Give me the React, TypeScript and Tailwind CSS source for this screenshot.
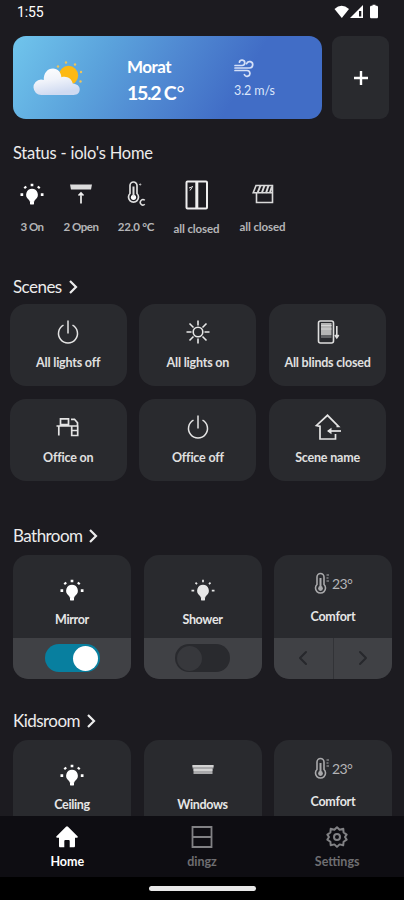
import type { ReactNode } from "react";
import { ChevronLeft, ChevronRight } from "lucide-react";

const BulbIcon = ({ dim = false }: { dim?: boolean }) => (
  <svg
    width="24"
    height="22"
    viewBox="0 0 24 22"
    className={dim ? "text-[#e6e6e6]" : "text-white"}
    fill="currentColor"
    stroke="currentColor"
  >
    <path
      d="M12 5.800a5.900 5.900 0 0 0-3.500 10.600c.8.600 1.100 1.100 1.100 2h4.800c0-.9.3-1.400 1.100-2A5.900 5.900 0 0 0 12 5.800z"
      stroke="none"
    />
    <rect x="10" y="17.800" width="4" height="3.800" rx="1.200" stroke="none" />
    <path
      d="M12 .8v2.400M4.500 3.600l1.500 1.600M19.500 3.600l-1.500 1.600M.5 11.700h2.700M20.800 11.700h2.700"
      strokeWidth={dim ? 1.7 : 2.700}
    />
  </svg>
);

const PowerIcon = () => (
  <svg width="22" height="26" viewBox="0 0 22 26" fill="none" stroke="#e4e4e4" strokeWidth="1.500">
    <path d="M11 1.500v13M6.500 6.200a9.500 9.500 0 1 0 9 0" />
  </svg>
);

const SunIcon = () => (
  <svg width="26" height="26" viewBox="0 0 26 26" fill="none" stroke="#e8e8e8" strokeWidth="1.600">
    <circle cx="13" cy="13" r="4.800" />
    <path d="M13 1.500v5M13 19.500v5M1.500 13h5M19.500 13h5M4.500 4.500l4 4M17.500 17.500l4 4M4.500 21.500l4-4M17.500 8.500l4-4" />
  </svg>
);

const BlindIcon = () => (
  <svg width="24" height="26" viewBox="0 0 24 26" fill="none" stroke="#dedede" strokeWidth="1.600">
    <rect x="2.500" y="2" width="15" height="22" rx="2" />
    <path d="M5 4h10.500v12H5z" fill="#b4b4b4" stroke="none" />
    <path d="M5 6.500h10.500M5 10h10.500" stroke="#d6d6d6" strokeWidth="1" />
    <path d="M5 16h10.500v3H5z" fill="#606164" stroke="none" />
    <path d="M20.800 7v11M18.900 16l1.900 2.800 1.900-2.800" />
  </svg>
);

const DeskIcon = () => (
  <svg width="24" height="20" viewBox="0 0 24 20" fill="none" stroke="#e4e4e4" strokeWidth="1.700">
    <path d="M4.500 1.800h8v5.700h-8zM.5 9h22M2.800 9v9.500M15.700 9v9.500h6V9M15.700 13.500h6M15 2.300h3.500l3 3.500v3M5 8h7" />
  </svg>
);

const HouseIcon = () => (
  <svg width="28" height="28" viewBox="0 0 28 28" fill="none" stroke="#e4e4e4" strokeWidth="1.700">
    <path d="M22.500 13.500h2L13.500 2.300 2.500 12.500l3.500.8V26h15.500v-5" />
    <path d="M27 18H14" />
    <path d="M17.500 14.800L13 18l4.500 3.200z" fill="#e4e4e4" stroke="none" />
  </svg>
);

const ComfortThermometer = () => (
  <svg width="17" height="24" viewBox="1 0 17 24" fill="none" stroke="#a9a9ab" strokeWidth="1.600">
    <path d="M4 12.500V5a3.500 3.500 0 0 1 7 0v7.500a5 5 0 1 1-7 0z" />
    <circle cx="7.500" cy="16.500" r="2.400" fill="#a9a9ab" stroke="none" />
    <path d="M7.500 6v10" strokeWidth="2" />
    <path d="M13.500 3h2.500M13.500 6h2M13.500 9h2.500" strokeWidth="1.200" />
  </svg>
);

const Thermometer = () => (
  <svg width="20" height="28" viewBox="0 0 20 28" fill="none" stroke="#dedede" strokeWidth="1.700">
    <path d="M4 13.500V5.500a3.500 3.500 0 0 1 7 0v8a5 5 0 1 1-7 0z" />
    <circle cx="7.500" cy="17.300" r="2.600" fill="#ffffff" stroke="none" />
    <path d="M7.500 6.500v10" strokeWidth="2" />
    <circle cx="14.200" cy="4.500" r=".6" strokeWidth="1" />
    <path d="M18.800 20.300a2.700 2.700 0 1 0 0 4" strokeWidth="1.500" />
  </svg>
);

const OpenIcon = () => (
  <svg width="24" height="22" viewBox="0 0 24 22" fill="none" stroke="#efefef">
    <path d="M1 1.500h22l-1 5H2z" fill="#dcdcdc" stroke="none" />
    <path d="M12 20.500V10M9.500 12.500L12 10l2.500 2.500" strokeWidth="1.700" />
  </svg>
);

const WindowIcon = () => (
  <svg width="24" height="30" viewBox="0 0 24 30" fill="none" stroke="#eeeeee" strokeWidth="2">
    <rect x="1.500" y="1.500" width="20.500" height="27" rx="1" />
    <path d="M11.800 2v26" strokeWidth="3" />
    <path d="M4 8l4-1.500M5 10.500l2-3" strokeWidth="1" />
  </svg>
);

const AwningIcon = () => (
  <svg width="22" height="20" viewBox="0 0 22 20" fill="none" stroke="#d9d9d9" strokeWidth="1.600">
    <path d="M4 1.500h16.500v7.300H1.200L4 1.500zM4.500 9v9.500h16V8.500" />
    <path d="M8.500 1.500L5.500 9M12.500 1.500L9.800 9M16.500 1.500L14 9M20 2.500L17.800 9" strokeWidth="2" />
  </svg>
);

const WeatherIcon = () => (
  <svg width="50" height="36" viewBox="0 0 50 36">
    <defs>
      <linearGradient id="cloud" x1="0" y1="0" x2="0.3" y2="1">
        <stop offset="0" stopColor="#ffffff" />
        <stop offset="0.5" stopColor="#f0f3fa" />
        <stop offset="1" stopColor="#cfdaf1" />
      </linearGradient>
    </defs>
    <circle cx="35.500" cy="14.500" r="9.700" fill="#fdb913" />
    <g fill="#edc45c">
      <circle cx="33" cy="1.500" r="1.200" />
      <circle cx="42" cy="3.500" r="1.200" />
      <circle cx="25" cy="5.500" r="1.200" />
      <circle cx="48" cy="11" r="1.200" />
      <circle cx="47.500" cy="20.500" r="1.200" />
    </g>
    <path
      d="M8.500 34a7.700 7.700 0 0 1-.5-15.500c1 0 2 .2 2.800.5C10.500 12 14.500 7.500 20 7.500c4.800 0 8 3.500 8.400 8.700 5.300-1.700 10.300 1.300 11.300 6.300 4.300.5 7 2.500 7 5.800 0 3.700-2.500 5.700-6 5.700z"
      fill="url(#cloud)"
    />
  </svg>
);

const WindIcon = () => (
  <svg width="20" height="19" viewBox="0 0 20 19" fill="none" stroke="#d5e0f7" strokeWidth="1.700" strokeLinecap="round">
    <path d="M1 6.500h7a2.700 2.700 0 1 0-2.600-3.300M1 9h14.500a3.200 3.200 0 1 0-3-4.300M1 11.500h12a2.900 2.900 0 1 1-2.600 4.200" />
  </svg>
);

const DingzIcon = () => (
  <svg width="24" height="22" viewBox="0 0 24 22" fill="none" stroke="#818184" strokeWidth="1.800">
    <path d="M2.500 1h19v20h-19zM2.500 11h19" />
  </svg>
);

const HomeIcon = () => (
  <svg width="24" height="22" viewBox="0 0 24 22" fill="#ffffff">
    <path d="M11 .7a1.500 1.500 0 0 1 2 0L22.500 10.200c.6.700.2 1.600-.7 1.600H20V20c0 .8-.5 1.300-1.300 1.300h-4V15a1 1 0 0 0-1-1h-3.400a1 1 0 0 0-1 1v6.300h-4C4.500 21.300 4 20.800 4 20v-8.200H2.200c-.9 0-1.300-.9-.7-1.600z" />
  </svg>
);

const GearIcon = () => (
  <svg width="22" height="22" viewBox="0 0 22 22" fill="none" stroke="#818184" strokeWidth="2" strokeLinejoin="round">
    <path d="M11 1.200l2.600 2.500 3.700-.9.300 3.700 3 2.100L19 11l1.600 2.600-3 2.100-.4 3.600-3.600-.9L11 20.900l-2.600-2.500-3.700.9-.3-3.600-3-2.100L3 11 1.400 8.600l3-2.100.3-3.700 3.700.9z" />
    <circle cx="11" cy="11" r="3" />
  </svg>
);

const ShutterIcon = () => (
  <svg width="24" height="12" viewBox="0 0 24 12" className="-mt-[9px]">
    <path d="M1.500 1h21v3.500h-1v5.500h-19V4.500h-1z" fill="#a9a9ab" />
    <path d="M1.500 2h21M2.500 6h19" stroke="#e0e0e0" strokeWidth="1.500" />
  </svg>
);

const statusItems = [
  { label: "3 On", icon: <BulbIcon />, box: "w-[38px]", text: "tracking-[-0.5px]", drop: "" },
  { label: "2 Open", icon: <OpenIcon />, box: "w-[60px]", text: "tracking-[-0.5px]", drop: "" },
  { label: "22.0 °C", icon: <Thermometer />, box: "w-[50px]", text: "tracking-[-0.2px]", drop: "" },
  { label: "all closed", icon: <WindowIcon />, box: "w-[71px]", text: "tracking-[-0.1px]", drop: "pt-[2px]" },
  { label: "all closed", icon: <AwningIcon />, box: "w-[61px]", text: "tracking-[-0.1px]", drop: "" },
];

const scenes = [
  { label: "All lights off", icon: <PowerIcon /> },
  { label: "All lights on", icon: <SunIcon /> },
  { label: "All blinds closed", icon: <BlindIcon /> },
  { label: "Office on", icon: <DeskIcon /> },
  { label: "Office off", icon: <PowerIcon /> },
  { label: "Scene name", icon: <HouseIcon /> },
];

const SectionTitle = ({ children }: { children: ReactNode }) => (
  <div className="flex h-6 items-center gap-[4px] pl-[13px] text-[17px] tracking-[-0.55px] text-[#ececec]">
    <span>{children}</span>
    <svg width="14" height="16" viewBox="0 0 14 16" fill="none" stroke="#ececec" strokeWidth="2.200">
      <path d="M4 2l6 6-6 6" />
    </svg>
  </div>
);

const Toggle = ({ on }: { on: boolean }) => (
  <div
    className={`flex h-7 w-[55px] items-center rounded-full px-[2px] ${
      on ? "justify-end bg-[#087f9f]" : "justify-start bg-[#292a2e]"
    }`}
  >
    <div className={`size-[25px] rounded-full ${on ? "bg-white" : "bg-[#37383c]"}`} />
  </div>
);

const DeviceCard = ({ label, icon, footer }: { label: string; icon: ReactNode; footer: ReactNode }) => (
  <div className="flex h-[124px] w-[118px] flex-col overflow-hidden rounded-[15px] bg-[#292a2e]">
    <div className="flex h-[83px] flex-col items-center pt-[24px]">
      <div className="flex h-[22px] items-center">{icon}</div>
      <span className="mt-[9px] text-[12.500px] leading-5 font-bold tracking-[-0.35px] text-[#e6e6e6]">{label}</span>
    </div>
    <div className="flex h-[41px] items-center justify-center bg-[#404145]">{footer}</div>
  </div>
);

const ComfortCard = () => (
  <div className="flex h-[124px] w-[118px] flex-col overflow-hidden rounded-[15px] bg-[#292a2e]">
    <div className="flex h-[83px] flex-col items-center pt-[16px]">
      <div className="flex h-[26px] items-center gap-[1px] text-[14px] tracking-[-0.6px] text-[#b4b4b6]">
        <ComfortThermometer />
        <span>23°</span>
      </div>
      <span className="mt-[10px] text-[12.500px] leading-5 font-bold tracking-[-0.2px] text-[#e6e6e6]">Comfort</span>
    </div>
    <div className="flex h-[41px] bg-[#404145] text-[#27282c]">
      <div className="flex flex-1 items-center justify-center border-r border-[#323337]">
        <ChevronLeft size={24} />
      </div>
      <div className="flex flex-1 items-center justify-center">
        <ChevronRight size={24} />
      </div>
    </div>
  </div>
);

const App = () => {
  return (
    <div className="flex h-[900px] w-[404px] flex-col overflow-hidden bg-[#1c1b20] font-['Lato',sans-serif] text-white">
      <main className="h-[816px] overflow-hidden">
        <div className="flex h-[36px] items-start justify-between pt-[3px] pr-[25px] pl-[17px]">
          <span className="font-['Roboto',sans-serif] text-[14px] leading-[19px] tracking-[-0.1px]">1:55</span>
          <svg width="45" height="16" viewBox="0 0 45 16" className="mt-[1px]" fill="#ffffff">
            <path d="M.5 5Q7.500-1.500 15 5L7.800 14z" />
            <path d="M29 1v13H16z" />
            <path d="M25 7h2.300v5.500H25z" fill="#1c1b20" />
            <path d="M37.500 1.800h1V.7h3v1.100h1c1 0 1.500.5 1.500 1.500v9.500c0 1-.5 1.500-1.500 1.500h-5c-1 0-1.500-.5-1.500-1.500V3.300c0-1 .5-1.500 1.500-1.500z" />
          </svg>
        </div>

        <div className="flex h-[83px] gap-[10px] pl-[13px]">
          <div className="flex w-[309px] rounded-[13px] bg-[linear-gradient(120deg,#70c5ec_0%,#5ba3dc_28%,#4f87d1_50%,#416dc6_72%,#416dc6_100%)]">
            <div className="w-[114px] pt-[25px] pl-[20px]">
              <WeatherIcon />
            </div>
            <div className="w-[107px] pt-[19px]">
              <div className="text-[17px] leading-6 font-bold tracking-[-0.5px]">Morat</div>
              <div className="flex text-[19.500px] leading-[27px] font-bold tracking-[-1.300px]">
                <span>15.2 C</span>
                <span className="ml-[1px] font-normal">°</span>
              </div>
            </div>
            <div className="pt-[23px] text-[#dbe6fa]">
              <WindIcon />
              <div className="mt-[3px] text-[12.500px] leading-[19px] tracking-[-0.1px]">3.2 m/s</div>
            </div>
          </div>
          <div className="flex w-[57px] items-center justify-center rounded-[9px] bg-[#292a2e]">
            <svg width="16" height="16" viewBox="0 0 16 16" stroke="#ffffff" strokeWidth="2.400">
              <path d="M8 1v14M1 8h14" />
            </svg>
          </div>
        </div>

        <div className="mt-[22px] h-6 pl-[13px] text-[16.500px] leading-6 tracking-[-0.22px] text-[#ececec]">
          Status - iolo's Home
        </div>
        <div className="mt-[13px] flex h-[97px] pl-[13px]">
          {statusItems.map((item, index) => (
            <div key={index} className={`flex shrink-0 flex-col items-center ${item.box}`}>
              <div className={`flex h-[32px] items-center ${item.drop}`}>{item.icon}</div>
              <span className={`mt-[9px] text-[11.500px] leading-4 font-bold whitespace-nowrap text-[#b5b5b7] ${item.text} ${item.drop}`}>
                {item.label}
              </span>
            </div>
          ))}
        </div>

        <SectionTitle>Scenes</SectionTitle>
        <div className="mt-[5px] grid grid-cols-[117px_117px_117px] gap-x-[12.700px] gap-y-[12.500px] pl-[9.700px]">
          {scenes.map((scene) => (
            <div key={scene.label} className="flex h-[82px] flex-col items-center rounded-[16px] bg-[#292a2e] pt-[15px]">
              <div className="flex h-[26px] items-center">{scene.icon}</div>
              <span className="mt-[8px] text-[12.500px] leading-5 font-bold tracking-[-0.2px] text-[#e0e0e0]">
                {scene.label}
              </span>
            </div>
          ))}
        </div>

        <div className="mt-[43px]">
          <SectionTitle>Bathroom</SectionTitle>
        </div>
        <div className="mt-[7px] flex gap-[12.500px] pl-[13px]">
          <DeviceCard label="Mirror" icon={<BulbIcon />} footer={<Toggle on />} />
          <DeviceCard label="Shower" icon={<BulbIcon dim />} footer={<Toggle on={false} />} />
          <ComfortCard />
        </div>

        <div className="mt-[30px]">
          <SectionTitle>Kidsroom</SectionTitle>
        </div>
        <div className="mt-[7px] flex gap-[12.500px] pl-[13px]">
          <DeviceCard label="Ceiling" icon={<BulbIcon />} footer={null} />
          <DeviceCard label="Windows" icon={<ShutterIcon />} footer={null} />
          <ComfortCard />
        </div>
      </main>

      <nav className="grid h-[61px] grid-cols-3 bg-[#0e0d12] text-[12.500px] font-bold text-[#6e6e71]">
        <div className="flex flex-col items-center pt-[10px] text-white">
          <HomeIcon />
          <span className="mt-[5px] leading-[18px]">Home</span>
        </div>
        <div className="flex flex-col items-center pt-[10px]">
          <DingzIcon />
          <span className="mt-[5px] leading-[18px]">dingz</span>
        </div>
        <div className="flex flex-col items-center pt-[10px] pl-[1px]">
          <GearIcon />
          <span className="mt-[5px] leading-[18px]">Settings</span>
        </div>
      </nav>
      <div className="flex h-[23px] justify-center bg-black pt-[9px]">
        <div className="h-[5px] w-[107px] rounded-full bg-[#e8e8e8]" />
      </div>
    </div>
  );
};

export default App;
